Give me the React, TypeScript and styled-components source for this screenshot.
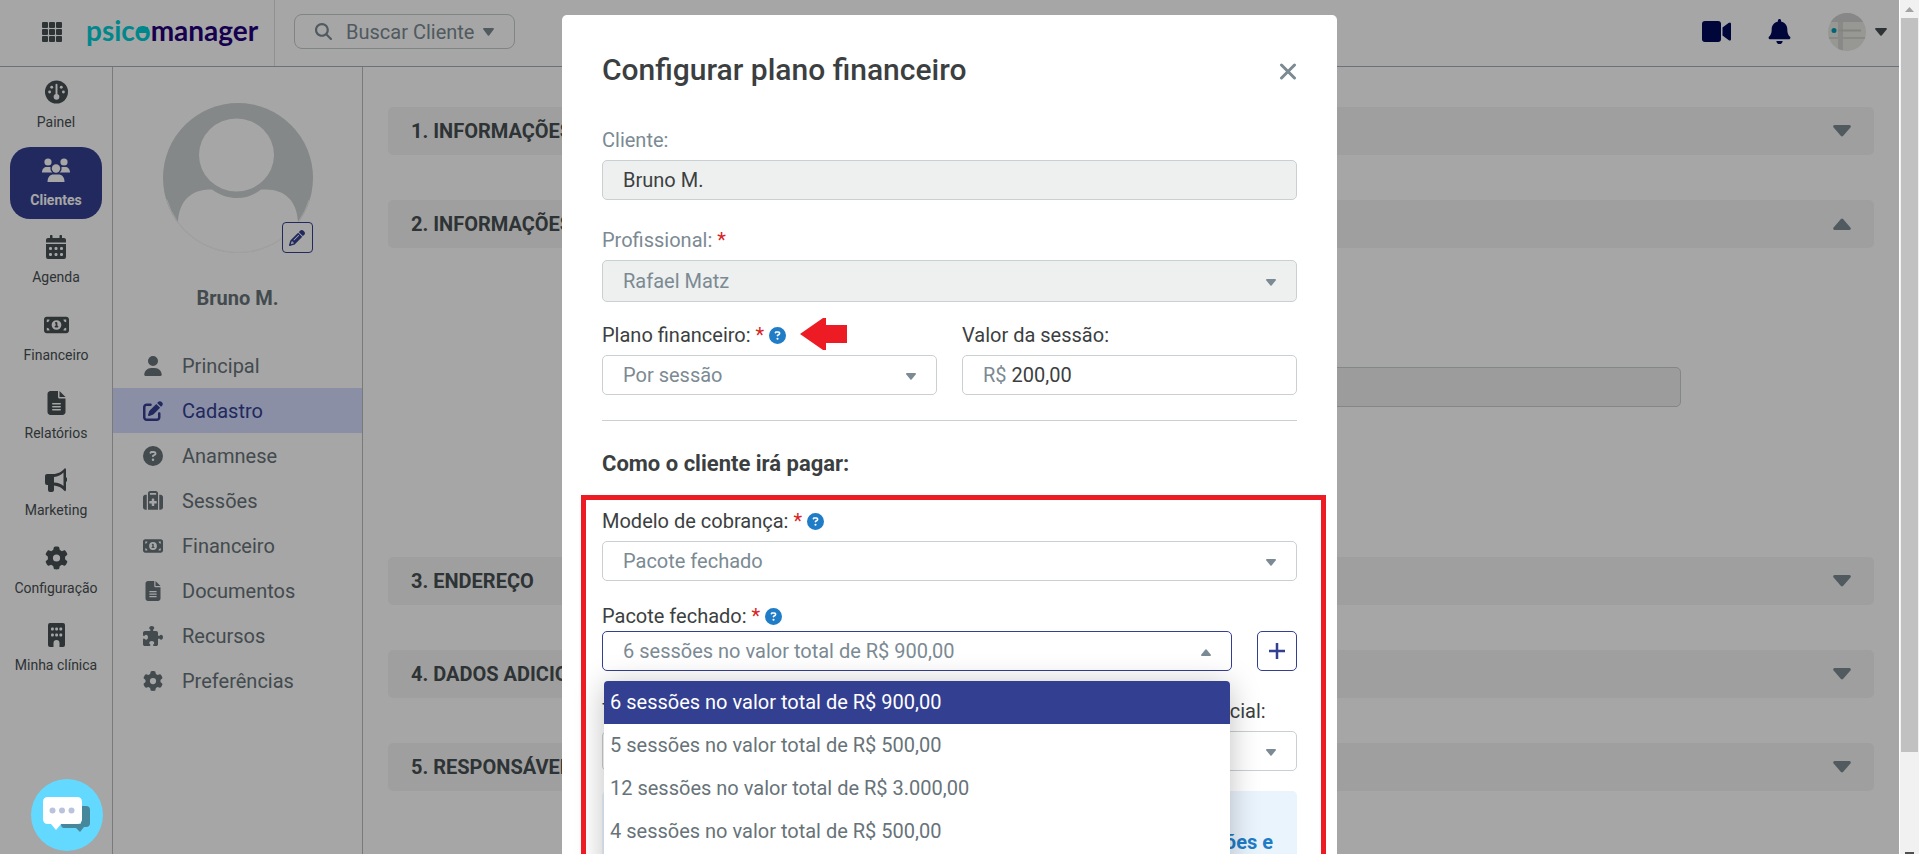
import React, { useState } from "react";
import styled, { createGlobalStyle, css } from "styled-components";
import { FaBell } from "react-icons/fa";
import {
  FaPenToSquare, FaCircleQuestion, FaSuitcaseMedical, FaMoneyBill1, FaFileLines, FaGear, FaUser, FaPencil, FaPuzzlePiece, FaMagnifyingGlass,
} from "react-icons/fa6";

const indigo = "#333f91";
const slate = "#7b8a93";
const ink = "#3c3f41";

const GlobalStyle = createGlobalStyle`
  *, *::before, *::after { box-sizing: border-box; }
  html, body { margin: 0; padding: 0; overflow: hidden; }
  body { font-family: Roboto, "Liberation Sans", sans-serif; font-size: 20px; line-height: 24px; color: ${ink}; background: #fff; }
  button, input, select { font: inherit; color: inherit; }
  button { padding: 0; cursor: pointer; }
  a { color: inherit; text-decoration: none; }
  h1, h2, p, ul { margin: 0; padding: 0; }
  ul { list-style: none; }
`;

const Screen = styled.div`
  display: grid;
  grid-template-columns: minmax(0, 1fr) 20px;
  height: 100vh;
`;
const Viewport = styled.div`
  position: relative;
  overflow: hidden;
  display: flex;
  flex-direction: column;
`;

/* Scroll bar */
const ScrollTrack = styled.div`
  display: flex;
  flex-direction: column;
  overflow: hidden;
  background: #f1f1f1;
  border-left: 1px solid #fff;
  padding: 0 1px;
`;
const ScrollEnd = styled.div`
  height: 18px;
  flex: none;
  display: grid;
  place-items: center;
`;
const ScrollThumb = styled.div`
  height: 86%;
  background: #c1c1c1;
`;
const ScrollFoot = styled(ScrollEnd)`
  margin-top: auto;
  height: 6px;
`;

/* Header */
const Header = styled.header`
  display: flex;
  align-items: center;
  height: 67px;
  flex: none;
  padding: 0 12px 3px 42px;
  border-bottom: 1px solid #a6b0ba;
`;
const IconButton = styled.button<{ $tone?: string }>`
  display: grid;
  place-items: center;
  border: 0;
  background: none;
  color: ${(p) => p.$tone ?? "#474f52"};
`;
const Brand = styled.a`
  display: flex;
  align-items: center;
  width: 189px;
  height: 66px;
  margin: 0 19px -3px 24px;
  padding-bottom: 7px;
  border-right: 1px solid #ddd;
  font-family: Lato, sans-serif;
  font-weight: 700;
  font-size: 28px;
  line-height: 32px;
  color: #24007a;
`;
const BrandAccent = styled.span`
  color: #00d0d8;
`;
const BrandO = styled.span`
  position: relative;
  &::after {
    content: "";
    position: absolute;
    left: 3px;
    right: 3px;
    top: 14px;
    height: 6px;
    background: currentColor;
  }
`;
const SearchButton = styled.button`
  display: flex;
  align-items: center;
  gap: 9px;
  height: 35px;
  padding: 0 20px;
  border: 1px solid #c6cbcd;
  border-radius: 8px;
  background: none;
  color: ${slate};
  & > span { margin-left: 5px; }
`;
const HeaderTools = styled.div`
  display: flex;
  align-items: center;
  gap: 36px;
  margin-left: auto;
`;
const Account = styled.button`
  display: flex;
  align-items: center;
  gap: 9px;
  border: 0;
  background: none;
  color: #474f52;
`;

/* Body */
const Columns = styled.div`
  flex: 1;
  min-height: 0;
  display: grid;
  grid-template-columns: 113px 250px minmax(0, 1fr);
`;
const MainNav = styled.nav`
  border-right: 1px solid #bcbcbc;
  padding: 2px 10px 0;
`;
const NavList = styled.ul`
  display: grid;
  grid-auto-rows: 1fr;
  gap: 5px;
  height: 616px;
`;
const NavLink = styled.a<{ $active?: boolean }>`
  display: flex;
  flex-direction: column;
  align-items: center;
  gap: 8px;
  height: 100%;
  padding-top: 11px;
  border-radius: 20px;
  font-size: 14px;
  line-height: 20px;
  white-space: nowrap;
  color: #474f52;
  & > svg { height: 24px; }
  ${(p) => p.$active && css`
    background: ${indigo};
    color: #fff;
    font-weight: 700;
  `}
`;
const Profile = styled.aside`
  border-right: 1px solid #bcbcbc;
  padding-top: 36px;
`;
const Portrait = styled.div`
  position: relative;
  width: 150px;
  height: 150px;
  margin: 0 auto;
`;
const EditPortrait = styled.button`
  position: absolute;
  right: 0;
  bottom: 0;
  width: 31px;
  height: 31px;
  display: grid;
  place-items: center;
  border: 1px solid ${indigo};
  border-radius: 4px;
  background: #fff;
  color: ${indigo};
`;
const ProfileName = styled.p`
  margin: 33px 0 33px;
  text-align: center;
  font-weight: 700;
  color: #677379;
`;
const ProfileLink = styled.a<{ $active?: boolean }>`
  display: flex;
  align-items: center;
  gap: 19px;
  height: 45px;
  padding-left: 30px;
  color: ${(p) => (p.$active ? indigo : "#677379")};
  background: ${(p) => (p.$active ? "#d4dcff" : "none")};
  & > svg { width: 20px; height: 20px; }
`;
const Main = styled.main`
  padding: 40px 25px 0;
`;
const Section = styled.section`
  margin-bottom: 45px;
`;
const SectionToggle = styled.button`
  display: flex;
  align-items: center;
  justify-content: space-between;
  width: 100%;
  height: 48px;
  padding: 0 23px;
  border: 0;
  border-radius: 5px;
  background: #f5f5f5;
  font-weight: 700;
  color: #474f52;
  & > svg { color: ${slate}; }
`;
const SectionBody = styled.div`
  padding: 119px 13% 105px;
`;

/* Modal */
const Overlay = styled.div`
  position: absolute;
  inset: 0;
  overflow: hidden;
  padding-top: 15px;
  background: rgba(0, 0, 0, 0.35);
`;
const Dialog = styled.div`
  position: relative;
  width: 775px;
  max-width: 100%;
  min-height: 100%;
  margin: 0 auto;
  padding: 35px 40px 0;
  border-radius: 5px;
  background: #fff;
`;
const DialogHead = styled.div`
  display: flex;
  align-items: center;
  justify-content: space-between;
  height: 40px;
  margin-bottom: 38px;
`;
const DialogTitle = styled.h1`
  font-size: 30px;
  line-height: 40px;
  font-weight: 500;
`;
const Field = styled.div<{ $tight?: boolean }>`
  display: flex;
  flex-direction: column;
  gap: ${(p) => (p.$tight ? 3 : 8)}px;
  min-width: 0;
`;
const Label = styled.label<{ $muted?: boolean }>`
  color: ${(p) => (p.$muted ? slate : ink)};
  white-space: nowrap;
`;
const LabelRow = styled.div`
  position: relative;
  display: flex;
  align-items: center;
  gap: 5px;
  height: 24px;
`;
const Required = styled.span`
  color: #d9231f;
`;
const HelpButton = styled(IconButton)`
  color: #1f7cc6;
`;
const controlBox = css<{ $active?: boolean }>`
  width: 100%;
  height: 40px;
  border: 1px solid ${(p) => (p.$active ? indigo : "#c9d0d2")};
  border-radius: 5px;
  background: #fff;
  outline: 0;
  &:disabled { background: #eef0ef; opacity: 1; }
`;
const TextInput = styled.input`
  ${controlBox}
  padding: 0 20px;
  color: ${ink};
`;
const SelectWrap = styled.div`
  position: relative;
  flex: 1;
  min-width: 0;
  display: grid;
`;
const SelectBox = styled.select<{ $active?: boolean; $tall?: boolean }>`
  ${controlBox}
  height: ${(p) => (p.$tall ? 42 : 40)}px;
  appearance: none;
  padding: 0 48px 0 20px;
  color: ${slate};
`;
const SelectArrow = styled.span`
  position: absolute;
  right: 21px;
  top: 2px;
  bottom: 0;
  display: grid;
  place-items: center;
  color: ${slate};
  pointer-events: none;
`;
const MoneyBox = styled.div`
  ${controlBox}
  display: flex;
  align-items: center;
  gap: 5px;
  padding: 0 20px;
  color: ${slate};
`;
const MoneyInput = styled.input`
  flex: 1;
  min-width: 0;
  padding: 0;
  border: 0;
  outline: 0;
  background: none;
  color: ${ink};
`;
const Pair = styled.div`
  display: grid;
  grid-template-columns: 1fr 1fr;
  gap: 25px;
`;
const Stack = styled.div<{ $top: number }>`
  margin-top: ${(p) => p.$top}px;
`;
const Rule = styled.hr`
  height: 1px;
  margin: 25px 0 30px;
  border: 0;
  background: #c9d0d2;
`;
const Subtitle = styled.h2`
  font-size: 22px;
  line-height: 26px;
  font-weight: 700;
`;
const PackRow = styled.div`
  display: flex;
  gap: 25px;
`;
const AddButton = styled.button`
  width: 40px;
  height: 40px;
  display: grid;
  place-items: center;
  border: 1px solid ${indigo};
  border-radius: 5px;
  background: #fff;
  color: ${indigo};
`;
const OptionPanel = styled.div`
  position: absolute;
  z-index: 2;
  top: 50px;
  left: 2px;
  right: 2px;
  padding-bottom: 30px;
  border-radius: 4px;
  background: #fff;
  box-shadow: 0 4px 30px rgba(0, 0, 0, 0.25);
`;
const OptionList = styled.ul`
  display: grid;
  grid-auto-rows: 1fr;
  height: 171px;
  border-radius: 4px 4px 0 0;
  overflow: hidden;
`;
const Option = styled.li<{ $active?: boolean }>`
  display: flex;
  align-items: center;
  padding: 0 6px;
  color: ${(p) => (p.$active ? "#fff" : "#677379")};
  background: ${(p) => (p.$active ? indigo : "none")};
`;
const Notice = styled.div`
  margin-top: 20px;
  height: 120px;
  padding: 39px 24px 0;
  border-radius: 5px;
  background: #eaf4fd;
  color: #1f7cc6;
  font-weight: 700;
  text-align: right;
`;
const Highlight = styled.div`
  position: absolute;
  z-index: 3;
  top: 480px;
  left: 19px;
  right: 11px;
  bottom: 3px;
  border: 5px solid #ed1c24;
  pointer-events: none;
`;
const Pointer = styled.svg`
  position: absolute;
  left: 198px;
  top: -5px;
`;
const ChatButton = styled.button`
  position: absolute;
  left: 31px;
  bottom: 3px;
  width: 72px;
  height: 72px;
  display: grid;
  place-items: center;
  border: 0;
  border-radius: 50%;
  background: #63d9ff;
`;

const Caret = ({ up, w = 12, h = 8 }: { up?: boolean; w?: number; h?: number }) => (
  <svg width={w} height={h} viewBox="0 0 12 8" preserveAspectRatio="none" fill="currentColor" aria-hidden="true">
    <path d={up ? "M1 8Q-.4 7.600.4 6.400L5.300.6Q6 0 6.700.6L11.600 6.400Q12.400 7.600 11 8Z" : "M1 0Q-.4.4.4 1.600L5.300 7.400Q6 8 6.700 7.400L11.600 1.600Q12.400.4 11 0Z"} />
  </svg>
);
const GridIcon = () => (
  <svg width="20" height="20" viewBox="0 0 20 20" fill="currentColor" aria-hidden="true">
    {[0, 7, 14].map((y) => [0, 7, 14].map((x) => <rect key={`${x}-${y}`} x={x} y={y} width="6" height="6" rx="1" />))}
  </svg>
);
const CameraIcon = () => (
  <svg width="29" height="21" viewBox="0 0 29 21" fill="currentColor" aria-hidden="true">
    <rect width="19" height="21" rx="3" />
    <path d="M20.500 6.500L26.500 2Q29 .5 29 3v15q0 2.500-2.500 1L20.500 14.500Z" />
  </svg>
);
const GaugeIcon = () => (
  <svg width="23" height="24" viewBox="0 0 24 24" aria-hidden="true">
    <circle cx="12" cy="12" r="12" fill="currentColor" />
    <g fill="#fff">
      <rect x="11" y="3.500" width="2" height="13" rx="1" />
      <circle cx="12" cy="17" r="3" />
      <circle cx="7" cy="7" r="1.500" /><circle cx="17" cy="7" r="1.500" />
      <circle cx="4.800" cy="12" r="1.500" /><circle cx="19.200" cy="12" r="1.500" />
    </g>
  </svg>
);
const TeamIcon = () => (
  <svg width="28" height="24" viewBox="0 0 28 24" fill="currentColor" aria-hidden="true">
    <circle cx="6" cy="4" r="3.600" /><circle cx="22" cy="4" r="3.600" />
    <path d="M0 14.500C0 11 2 9 5 9h3.500Q8 13 10.500 14.500ZM28 14.500C28 11 26 9 23 9h-3.500Q20 13 17.500 14.500Z" />
    <circle cx="14" cy="10.500" r="4.200" />
    <path d="M5.500 24C5.500 19 8 16.500 11.500 16.500h5C20 16.500 22.500 19 22.500 24Z" />
  </svg>
);
const CalendarIcon = () => (
  <svg width="20" height="24" viewBox="0 0 20 24" aria-hidden="true">
    <path fill="currentColor" d="M4 3V1a1 1 0 0 1 2.500 0v2h7V1a1 1 0 0 1 2.500 0v2h2q2 0 2 2v2.500H0V5q0-2 2-2ZM0 9h20v13q0 2-2 2H2q-2 0-2-2Z" />
    <g fill="#fff">{[12, 18].map((y) => [3, 8.500, 14].map((x) => <rect key={`${x}-${y}`} x={x} y={y} width="3" height="3" rx="1.200" />))}</g>
  </svg>
);
const MegaphoneIcon = () => (
  <svg width="22" height="24" viewBox="0 0 22 24" aria-hidden="true">
    <path fill="currentColor" fillRule="evenodd" d="M2 6h6c5 0 9-2.500 11-5q1.500-1.500 2 .5V9q1.200 1 1.200 2.500T21 14v8q-.5 2-2 .5c-2-2.500-5-4.500-10-5V22q0 2-2 2H5q-2 0-2-2v-5H2q-2 0-2-2V8q0-2 2-2Zm7 3v5.500c4 0 7 1.500 9.500 3.500V4.500C16 7 13 8.500 9 9Z" />
  </svg>
);
const BuildingIcon = () => (
  <svg width="17" height="24" viewBox="0 0 17 24" aria-hidden="true">
    <path fill="currentColor" d="M2 0h13q2 0 2 2v20q0 2-2 2h-3.500v-4a3 3 0 0 0-6 0v4H2q-2 0-2-2V2Q0 0 2 0Z" />
    <g fill="#fff">{[4.500, 10.500].map((y) => [3, 7.200, 11.400].map((x) => <rect key={`${x}-${y}`} x={x} y={y} width="2.800" height="3" rx="1" />))}</g>
  </svg>
);
const PortraitArt = () => (
  <svg width="150" height="150" viewBox="0 0 150 150" aria-hidden="true">
    <clipPath id="portrait"><circle cx="75" cy="75" r="75" /></clipPath>
    <g clipPath="url(#portrait)">
      <rect width="150" height="150" fill="#cbd1d1" />
      <path fill="#fff" d="M15 150V119C16 98 28 87 46 86.500h3C58 93 66 95 74 95s16-2 24-8.500h5C122 86.500 134 98 135 119v31Z" />
      <ellipse cx="73.500" cy="52" rx="37.500" ry="36.500" fill="#fff" />
    </g>
    <circle cx="75" cy="75" r="74.500" fill="none" stroke="#f5f5f5" strokeDasharray="190 300" strokeDashoffset="-22" />
  </svg>
);
const AccountArt = () => (
  <svg width="38" height="38" viewBox="0 0 38 38" aria-hidden="true">
    <clipPath id="account"><circle cx="19" cy="19" r="19" /></clipPath>
    <g clipPath="url(#account)">
      <rect width="38" height="38" fill="#e9e8e2" />
      <rect width="38" height="9" fill="#cfcfcf" />
      <path fill="#d3d3cf" d="M10 9h5v29h-5zM0 24h38v2H0z" />
      <circle cx="6" cy="17.500" r="2.500" fill="#009db5" />
      <path stroke="#c9c9c6" strokeWidth="2" d="M10 17.500h23" />
    </g>
  </svg>
);
const ChatArt = () => (
  <svg width="48" height="36" viewBox="0 0 48 36" aria-hidden="true">
    <path fill="#47879c" d="M18 27h20V9h5q4 0 4 4v13q0 4-4 4h-2l-4 5-4-4H21q-3 0-3-4Z" />
    <path fill="#fff" d="M5 0h29q5 0 5 5v17q0 5-5 5H18l-5 6-5-6H5q-5 0-5-5V5Q0 0 5 0Z" />
    <g fill="#b9c4dc"><circle cx="9.500" cy="13.500" r="3" /><circle cx="19" cy="13.500" r="3" /><circle cx="28.500" cy="13.500" r="3" /></g>
  </svg>
);

const navItems = [
  { label: "Painel", icon: <GaugeIcon /> },
  { label: "Clientes", icon: <TeamIcon />, active: true },
  { label: "Agenda", icon: <CalendarIcon /> },
  { label: "Financeiro", icon: <FaMoneyBill1 size={25} /> },
  { label: "Relatórios", icon: <FaFileLines size={23} /> },
  { label: "Marketing", icon: <MegaphoneIcon /> },
  { label: "Configuração", icon: <FaGear size={23} /> },
  { label: "Minha clínica", icon: <BuildingIcon /> },
];
const profileItems = [
  { label: "Principal", icon: <FaUser /> },
  { label: "Cadastro", icon: <FaPenToSquare />, active: true },
  { label: "Anamnese", icon: <FaCircleQuestion /> },
  { label: "Sessões", icon: <FaSuitcaseMedical /> },
  { label: "Financeiro", icon: <FaMoneyBill1 /> },
  { label: "Documentos", icon: <FaFileLines /> },
  { label: "Recursos", icon: <FaPuzzlePiece /> },
  { label: "Preferências", icon: <FaGear /> },
];
const sections = ["1. INFORMAÇÕES", "2. INFORMAÇÕES", "3. ENDEREÇO", "4. DADOS ADICIONAIS", "5. RESPONSÁVEL"];
const packs = [
  "6 sessões no valor total de R$ 900,00",
  "5 sessões no valor total de R$ 500,00",
  "12 sessões no valor total de R$ 3.000,00",
  "4 sessões no valor total de R$ 500,00",
];

type SelectProps = { id: string; options: string[]; active?: boolean; tall?: boolean; disabled?: boolean; children?: React.ReactNode };
const Select = ({ id, options, active, tall, disabled, children }: SelectProps) => (
  <SelectWrap>
    <SelectBox id={id} $active={active} $tall={tall} disabled={disabled}>
      {options.map((o) => <option key={o}>{o}</option>)}
    </SelectBox>
    <SelectArrow><Caret up={active} w={10} h={7} /></SelectArrow>
    {children}
  </SelectWrap>
);
const Help = ({ topic }: { topic: string }) => (
  <HelpButton type="button" aria-label={`Ajuda: ${topic}`}><FaCircleQuestion size={17} /></HelpButton>
);

export default function App() {
  const [value, setValue] = useState("200,00");
  return (
    <Screen>
      <GlobalStyle />
      <Viewport>
        <Header>
          <IconButton type="button" aria-label="Aplicativos"><GridIcon /></IconButton>
          <Brand href="#"><BrandAccent>psic<BrandO>o</BrandO></BrandAccent>manager</Brand>
          <SearchButton type="button"><FaMagnifyingGlass size={17} /><span>Buscar Cliente</span><Caret w={11} h={8} /></SearchButton>
          <HeaderTools>
            <IconButton type="button" aria-label="Vídeo" $tone="#00085a"><CameraIcon /></IconButton>
            <IconButton type="button" aria-label="Notificações" $tone="#00085a"><FaBell size={25} /></IconButton>
            <Account type="button" aria-label="Conta"><AccountArt /><Caret w={12} h={8} /></Account>
          </HeaderTools>
        </Header>
        <Columns>
          <MainNav>
            <NavList>
              {navItems.map((n) => (
                <li key={n.label}><NavLink href="#" $active={n.active}>{n.icon}{n.label}</NavLink></li>
              ))}
            </NavList>
          </MainNav>
          <Profile>
            <Portrait>
              <PortraitArt />
              <EditPortrait type="button" aria-label="Editar foto"><FaPencil size={16} /></EditPortrait>
            </Portrait>
            <ProfileName>Bruno M.</ProfileName>
            <nav>
              {profileItems.map((p) => (
                <ProfileLink key={p.label} href="#" $active={p.active}>{p.icon}{p.label}</ProfileLink>
              ))}
            </nav>
          </Profile>
          <Main>
            {sections.map((s, i) => (
              <Section key={s}>
                <SectionToggle type="button">{s}<Caret up={i === 1} w={18} h={12} /></SectionToggle>
                {i === 1 && <SectionBody><TextInput aria-label="Plano" disabled /></SectionBody>}
              </Section>
            ))}
          </Main>
        </Columns>
        <Overlay>
          <Dialog role="dialog" aria-labelledby="dialog-title">
            <DialogHead>
              <DialogTitle id="dialog-title">Configurar plano financeiro</DialogTitle>
              <IconButton type="button" aria-label="Fechar" $tone={slate}>
                <svg width="18" height="20" viewBox="0 0 18 20" fill="none" stroke="currentColor" strokeWidth="3" strokeLinecap="round"><path d="M2.500 5l13 13M15.500 5L2.500 18" /></svg>
              </IconButton>
            </DialogHead>
            <Field>
              <Label $muted htmlFor="client">Cliente:</Label>
              <TextInput id="client" defaultValue="Bruno M." disabled />
            </Field>
            <Stack $top={28}>
              <Field>
                <Label $muted htmlFor="pro">Profissional: <Required>*</Required></Label>
                <Select id="pro" options={["Rafael Matz"]} tall disabled />
              </Field>
            </Stack>
            <Stack $top={21}>
              <Pair>
                <Field>
                  <LabelRow>
                    <Label htmlFor="plan">Plano financeiro: <Required>*</Required></Label>
                    <Help topic="plano financeiro" />
                    <Pointer width="48" height="32" viewBox="0 0 48 32" aria-hidden="true"><path fill="#ed1c24" d="M0 16L23 0h3v7h21v18H26v7h-3Z" /></Pointer>
                  </LabelRow>
                  <Select id="plan" options={["Por sessão"]} />
                </Field>
                <Field>
                  <Label htmlFor="value">Valor da sessão:</Label>
                  <MoneyBox>R$<MoneyInput id="value" value={value} onChange={(e) => setValue(e.target.value)} /></MoneyBox>
                </Field>
              </Pair>
            </Stack>
            <Rule />
            <Subtitle>Como o cliente irá pagar:</Subtitle>
            <Stack $top={32}>
              <Field>
                <LabelRow>
                  <Label htmlFor="model">Modelo de cobrança: <Required>*</Required></Label>
                  <Help topic="modelo de cobrança" />
                </LabelRow>
                <Select id="model" options={["Pacote fechado"]} />
              </Field>
            </Stack>
            <Stack $top={23}>
              <Field $tight>
                <LabelRow>
                  <Label htmlFor="pack">Pacote fechado: <Required>*</Required></Label>
                  <Help topic="pacote fechado" />
                </LabelRow>
                <PackRow>
                  <Select id="pack" options={packs} active>
                    <OptionPanel>
                      <OptionList>
                        {packs.map((p, i) => <Option key={p} $active={i === 0}>{p}</Option>)}
                      </OptionList>
                    </OptionPanel>
                  </Select>
                  <AddButton type="button" aria-label="Adicionar pacote"><svg width="16" height="16" viewBox="0 0 16 16" stroke="currentColor" strokeWidth="2.500"><path d="M8 0v16M0 8h16" /></svg></AddButton>
                </PackRow>
              </Field>
            </Stack>
            <Stack $top={28}>
              <Pair>
                <Field>
                  <Label htmlFor="due">Tipo de vencimento:</Label>
                  <Select id="due" options={["Mensal"]} />
                </Field>
                <Field>
                  <Label htmlFor="start">Número da sessão do ciclo inicial:</Label>
                  <Select id="start" options={["1"]} />
                </Field>
              </Pair>
            </Stack>
            <Notice>Saiba mais sobre sessões e</Notice>
            <Highlight />
          </Dialog>
        </Overlay>
        <ChatButton type="button" aria-label="Abrir chat"><ChatArt /></ChatButton>
      </Viewport>
      <ScrollTrack aria-hidden="true">
        <ScrollEnd><svg width="9" height="5"><path d="M0 5L4.500 0L9 5Z" fill="#a3a3a3" /></svg></ScrollEnd>
        <ScrollThumb />
        <ScrollFoot><svg width="9" height="5"><path d="M0 3h9v2H0Z" fill="#505050" /></svg></ScrollFoot>
      </ScrollTrack>
    </Screen>
  );
}
